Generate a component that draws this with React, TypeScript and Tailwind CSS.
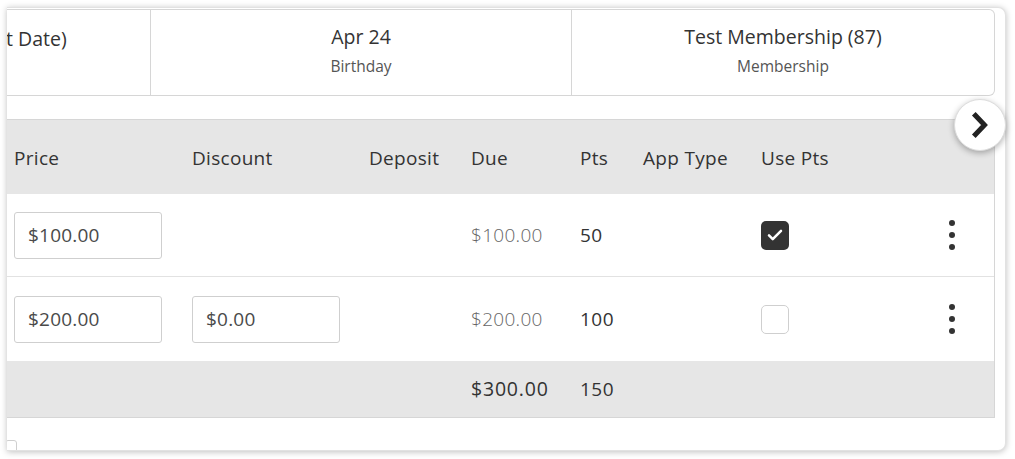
import React from "react";

const font = { fontFamily: '"Open Sans", "Liberation Sans", sans-serif' };

function Kebab() {
  return (
    <div className="flex flex-col items-center gap-[6px]">
      <span className="block h-[6px] w-[6px] rounded-full bg-[#333]" />
      <span className="block h-[6px] w-[6px] rounded-full bg-[#333]" />
      <span className="block h-[6px] w-[6px] rounded-full bg-[#333]" />
    </div>
  );
}

function Input({ value }: { value: string }) {
  return (
    <div className="flex h-[47px] w-[148px] items-center rounded-[3px] border border-[#cfcfcf] bg-white pl-[13px] text-[19px] tracking-[0.2px] text-[#4a4a4a]">
      {value}
    </div>
  );
}

function Check({ checked }: { checked: boolean }) {
  return checked ? (
    <div className="flex h-[29px] w-[28px] items-center justify-center rounded-[5px] bg-[#333]">
      <svg width="18" height="18" viewBox="0 0 24 24" fill="none">
        <path d="M4 12.5l5 5L20 6.5" stroke="white" strokeWidth="3.4" strokeLinecap="round" strokeLinejoin="round" />
      </svg>
    </div>
  ) : (
    <div className="h-[29px] w-[28px] rounded-[5px] border border-[#cfcfcf] bg-white" />
  );
}

const W = ["w-[178px]", "w-[177px]", "w-[102px]", "w-[109px]", "w-[63px]", "w-[118px]", "w-[163px]"];

function Row({ cells, className }: { cells: React.ReactNode[]; className: string }) {
  return (
    <div className={"flex items-center " + className}>
      <div className={W[0] + " shrink-0 pl-[7px]"}>{cells[0]}</div>
      <div className={W[1] + " shrink-0 pl-[7px]"}>{cells[1]}</div>
      <div className={W[2] + " shrink-0 pl-[7px]"}>{cells[2]}</div>
      <div className={W[3] + " shrink-0 pl-[7px]"}>{cells[3]}</div>
      <div className={W[4] + " shrink-0 pl-[7px]"}>{cells[4]}</div>
      <div className={W[5] + " shrink-0 pl-[7px]"}>{cells[5]}</div>
      <div className={W[6] + " shrink-0 pl-[7px]"}>{cells[6]}</div>
      <div className="flex flex-1 justify-start pl-[32px]">{cells[7]}</div>
    </div>
  );
}

export default function App() {
  return (
    <div className="h-[459px] w-[1015px] bg-white pl-[7px] pt-[7px]" style={font}>
      <div className="relative h-[444px] w-[999px] rounded-r-[8px] border-y border-r border-[#e2e2e2] bg-white shadow-[0_1px_6px_rgba(0,0,0,0.25)]">
        <div className="h-full overflow-hidden rounded-r-[8px] pr-[10px] pt-[1px]">
          {/* top header box */}
          <div className="flex h-[87px] rounded-r-[6px] border-y border-r border-[#d6d6d6] text-[#333]">
            <div className="w-[144px] shrink-0 border-r border-[#d6d6d6] pt-[14px] text-[19.5px]">
              <span className="-ml-[1px]">t Date)</span>
            </div>
            <div className="flex w-[421px] shrink-0 flex-col items-center border-r border-[#d6d6d6] pt-[14px]">
              <div className="text-[19.5px] leading-[26px]">Apr 24</div>
              <div className="mt-[6px] text-[15.5px] leading-[20px] text-[#555]">Birthday</div>
            </div>
            <div className="flex flex-1 flex-col items-center pt-[14px]">
              <div className="text-[19.5px] leading-[26px]">Test Membership (87)</div>
              <div className="mt-[6px] text-[15.5px] leading-[20px] text-[#555]">Membership</div>
            </div>
          </div>

          {/* table */}
          <div className="mt-[23px] border-y border-r border-[#d6d6d6] text-[19px] text-[#333]">
            <Row
              className="h-[74px] bg-[#e6e6e6] pt-[2px] tracking-[0.3px]"
              cells={["Price", "Discount", "Deposit", "Due", "Pts", "App Type", "Use Pts", null]}
            />
            <Row
              className="h-[83px] border-b border-[#e2e2e2] bg-white"
              cells={[
                <Input value="$100.00" />,
                null,
                null,
                <span className="font-light tracking-[0.3px] text-[#666]">$100.00</span>,
                <span className="tracking-[0.5px]">50</span>,
                null,
                <Check checked />,
                <Kebab />,
              ]}
            />
            <Row
              className="h-[84px] bg-white"
              cells={[
                <Input value="$200.00" />,
                <Input value="$0.00" />,
                null,
                <span className="font-light tracking-[0.3px] text-[#666]">$200.00</span>,
                <span className="tracking-[0.5px]">100</span>,
                null,
                <Check checked={false} />,
                <Kebab />,
              ]}
            />
            <Row
              className="h-[56px] bg-[#e6e6e6]"
              cells={[
                null,
                null,
                null,
                <span className="text-[19.5px] tracking-[0.8px] text-[#333]">$300.00</span>,
                <span className="tracking-[0.5px]">150</span>,
                null,
                null,
                null,
              ]}
            />
          </div>

          <div className="mt-[22px] -ml-[2px] h-[14px] w-[12px] rounded-[3px] border border-[#cfcfcf]" />
        </div>

        {/* scroll arrow */}
        <div className="absolute left-[947px] top-[91px] flex h-[52px] w-[52px] items-center justify-center rounded-full border border-[#ddd] bg-white shadow-[0_2px_6px_rgba(0,0,0,0.3)]">
          <svg width="26" height="28" viewBox="0 0 26 28" fill="none">
            <path d="M8.5 4.5l9 9.5-9 9.5" stroke="#222" strokeWidth="5" strokeLinecap="square" strokeLinejoin="miter" />
          </svg>
        </div>
      </div>
    </div>
  );
}
